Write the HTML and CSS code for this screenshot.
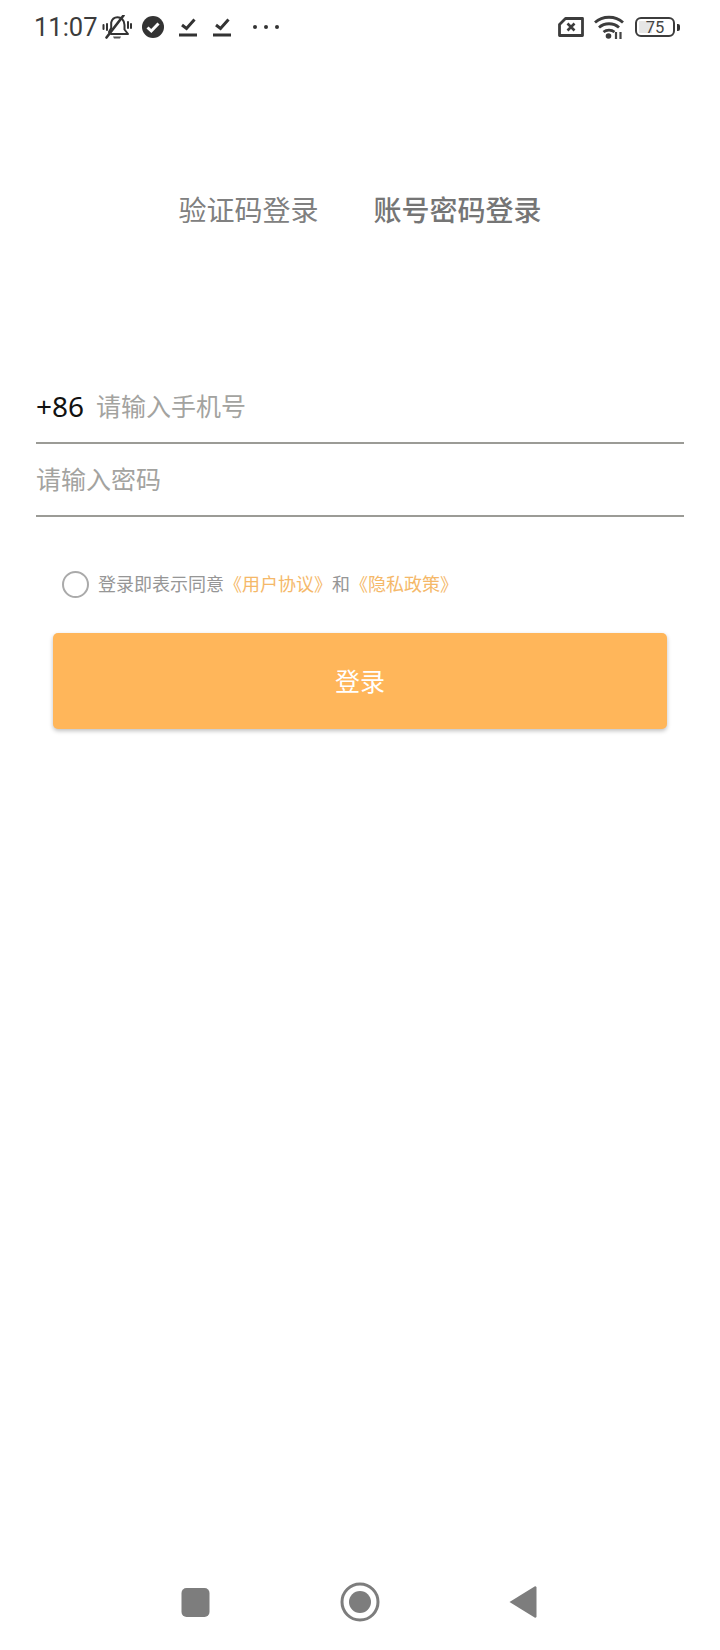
FILE: index.html
```html
<!DOCTYPE html>
<html lang="zh-CN">
<head>
<meta charset="utf-8">
<title>登录</title>
<link rel="stylesheet" href="styles.css">
</head>
<body>
<div class="page">
  <header class="status">
    <div class="status-left">
      <span class="time">11:07</span>
      <svg class="ic-bell" viewBox="0 0 30 24"><g fill="none" stroke="#333" stroke-linecap="round" stroke-linejoin="round"><path d="M9 19h17l-3.500-4.500V10C22.500 5 19 2.200 15.500 2.200 12.500 2.200 10 4 9.200 7.500V13L7 17" stroke-width="2"/><path d="M21.500 .5L4.500 22.500" stroke-width="2.600"/><path d="M5 9v6M1.500 10v4M26 7v6M29 9v4" stroke-width="2"/></g><path d="M11 21.500h8l-1 2h-6z" fill="#555"/></svg>
      <svg class="ic-check" viewBox="0 0 22 22"><circle cx="11" cy="11" r="11" fill="#333"/><path d="M5.500 11.500l3.800 3.500L16.500 7.500" fill="none" stroke="#fff" stroke-width="3"/></svg>
      <svg class="ic-task" viewBox="0 0 18 20"><path d="M3 8l4.500 3.500L15.500 2.500" fill="none" stroke="#333" stroke-width="3"/><rect y="16.500" width="18" height="3" fill="#333"/></svg>
      <svg class="ic-task" viewBox="0 0 18 20"><path d="M3 8l4.500 3.500L15.500 2.500" fill="none" stroke="#333" stroke-width="3"/><rect y="16.500" width="18" height="3" fill="#333"/></svg>
      <svg class="ic-dots" viewBox="0 0 26 4"><circle cx="2" cy="2" r="2" fill="#333"/><circle cx="13" cy="2" r="2" fill="#333"/><circle cx="24" cy="2" r="2" fill="#333"/></svg>
    </div>
    <div class="status-right">
      <svg class="ic-sim" viewBox="0 0 26 20"><path d="M7.500 1.500H24.500V18.500H1.500V7.500z" fill="none" stroke="#3c3c3c" stroke-width="2.800" stroke-linejoin="round"/><path d="M9.500 6.500l7 7M16.500 6.500l-7 7" stroke="#3c3c3c" stroke-width="2.600"/></svg>
      <svg class="ic-wifi" viewBox="0 0 30 24"><g fill="none" stroke="#3c3c3c" stroke-width="2.800"><path d="M1 7.500C8.500 .5 21.500 .5 29 7.500"/><path d="M5 12.500c5.500-5 14.500-5 20 0"/><path d="M9.500 17c3-2.500 8-2.500 11 0"/></g><circle cx="14.500" cy="21" r="2.800" fill="#3c3c3c"/><path d="M22 17v7M26.500 17v7" stroke="#444" stroke-width="2.200"/></svg>
      <div class="battery">
        <div class="battery-body"><span class="battery-fill"></span><span class="battery-num">75</span></div>
        <span class="battery-tip"></span>
      </div>
    </div>
  </header>

  <nav class="tabs">
    <span class="tab">验证码登录</span>
    <span class="tab tab-active">账号密码登录</span>
  </nav>

  <section class="form">
    <div class="field">
      <span class="code">+86</span>
      <span class="placeholder">请输入手机号</span>
    </div>
    <div class="field">
      <span class="placeholder">请输入密码</span>
    </div>
  </section>

  <div class="agree">
    <span class="radio"></span>
    <p class="agree-text">登录即表示同意<a class="link">《用户协议》</a>和<a class="link">《隐私政策》</a></p>
  </div>

  <button class="login" type="button">登录</button>

  <footer class="nav">
    <svg class="nav-square" viewBox="0 0 29 29"><rect x=".5" width="28" height="29" rx="5" fill="#7d7d7d"/></svg>
    <svg class="nav-circle" viewBox="0 0 40 40"><circle cx="20" cy="20" r="18" fill="none" stroke="#7d7d7d" stroke-width="3"/><circle cx="20" cy="20" r="11" fill="#7d7d7d"/></svg>
    <svg class="nav-back" viewBox="0 0 28 34"><path d="M26 1.200a1.500 1.500 0 0 1 1.500 1.300v29a1.500 1.500 0 0 1-1.500 1.300L.5 17z" fill="#7d7d7d"/></svg>
  </footer>
</div>
</body>
</html>
```
FILE: styles.css
```css
* { box-sizing: border-box; }
html, body { margin: 0; padding: 0; background: #fff; }
.page {
  width: 720px;
  height: 1650px;
  display: flex;
  flex-direction: column;
  font-family: "Noto Sans", "Noto Sans CJK SC", sans-serif;
  overflow: hidden;
}
.status {
  height: 54px;
  padding: 0 40px 0 34px;
  display: flex;
  justify-content: space-between;
  align-items: center;
}
.status-left, .status-right { display: flex; align-items: center; }
.time { font: 25.500px/28px Roboto, sans-serif; color: #3c3c3c; width: 68px; }
.ic-bell { width: 30px; height: 24px; }
.ic-check { width: 22px; height: 22px; margin-left: 10px; }
.ic-task { width: 18px; height: 20px; margin-left: 15px; }
.ic-task + .ic-task { margin-left: 16px; }
.ic-dots { width: 26px; height: 4px; margin-left: 22px; }
.ic-sim { width: 26px; height: 20px; margin-left: 1px; }
.ic-wifi { width: 30px; height: 24px; margin-left: 10px; }
.battery { display: flex; align-items: center; margin-left: 11px; }
.battery-body {
  width: 40px;
  height: 20px;
  border: 2px solid #3c3c3c;
  border-radius: 6px;
  display: flex;
  align-items: center;
  justify-content: center;
  position: relative;
}
.battery-fill {
  position: absolute;
  left: 2px;
  top: 2px;
  bottom: 2px;
  width: 13px;
  background: #e6e6e6;
}
.battery-num {
  position: relative;
  font: 16.500px/17px Roboto, sans-serif;
  color: #444;
}
.battery-tip { width: 3px; height: 7px; margin-left: 2px; background: #333; border-radius: 0 2px 2px 0; }
.tabs {
  margin-top: 135px;
  height: 40px;
  display: flex;
  justify-content: center;
  align-items: center;
  gap: 55px;
  font-family: "Noto Sans CJK SC", sans-serif;
  font-size: 28px;
  color: #808080;
}
.tab-active { font-weight: 500; color: #757575; }
.form { margin: 142px 36px 0; }
.field {
  height: 73px;
  padding-bottom: 2px;
  border-bottom: 2px solid #9b9b96;
  display: flex;
  align-items: center;
}
.code { font-size: 28px; color: #111; width: 60px; }
.placeholder { margin-bottom: 2px; font-family: "Noto Sans CJK SC", sans-serif; font-size: 25px; color: #a3a3a0; }
.agree {
  margin: 53px 0 0 62px;
  height: 28px;
  display: flex;
  align-items: center;
  gap: 9px;
}
.radio {
  width: 27px;
  height: 27px;
  border: 2px solid #aaa;
  border-radius: 50%;
}
.agree-text {
  margin: 0 0 2px;
  font-family: "Noto Sans CJK SC", sans-serif;
  font-size: 18px;
  color: #969696;
}
.link { color: #f5b869; }
.login {
  margin: 35px 53px 0;
  height: 96px;
  padding: 0 0 3px;
  border: 0;
  border-radius: 5px;
  background: #ffb65a;
  color: #fff;
  font-family: "Noto Sans CJK SC", sans-serif;
  font-size: 25px;
  box-shadow: 0 2px 4px rgba(0, 0, 0, .25);
}
.nav {
  margin-top: auto;
  margin-bottom: 28px;
  padding-left: 181px;
  display: flex;
  align-items: center;
  gap: 130px;
}
.nav-square { width: 29px; height: 29px; }
.nav-circle { width: 40px; height: 40px; }
.nav-back { width: 28px; height: 34px; margin-left: -1px; }
```
